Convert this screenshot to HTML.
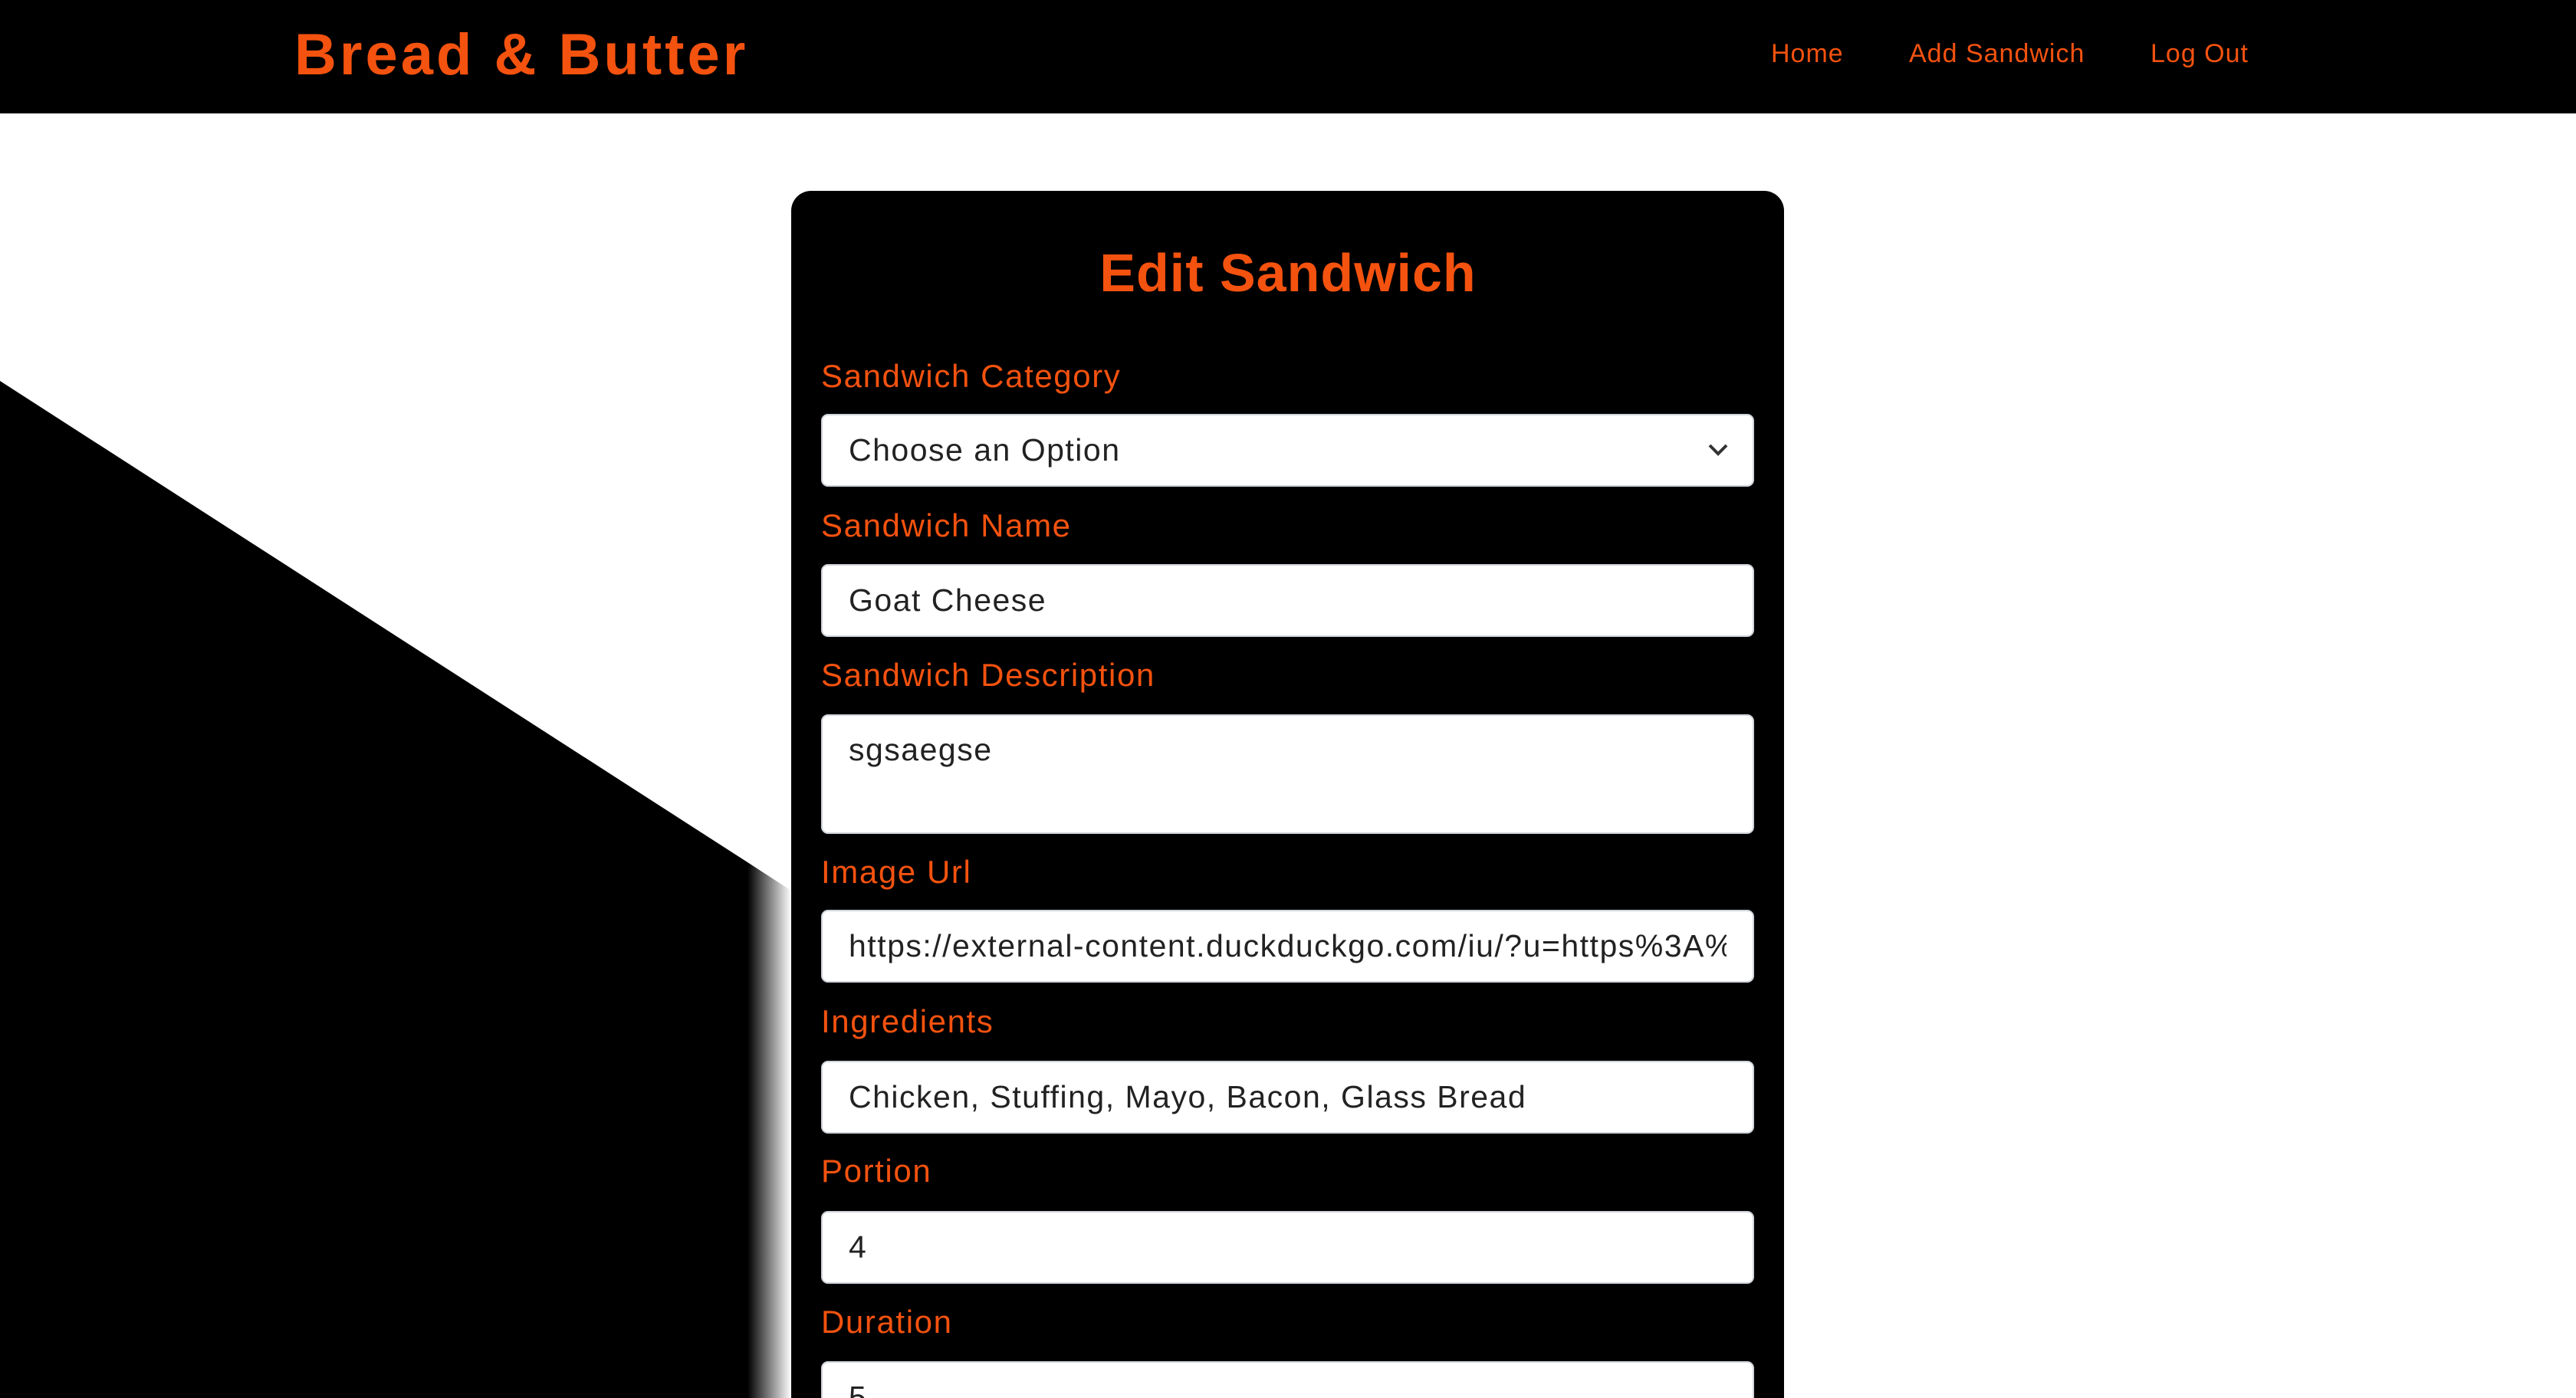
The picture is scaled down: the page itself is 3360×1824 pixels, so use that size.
<!DOCTYPE html>
<html><head><meta charset="utf-8"><style>
*{box-sizing:border-box;margin:0;padding:0}
html,body{width:3360px;height:1824px;overflow:hidden}
body{background:#fff;font-family:"Liberation Sans",sans-serif;position:relative}
.hdr{position:absolute;left:0;top:0;width:3360px;height:148px;background:#000}
.logo{position:absolute;left:384px;top:24px;font-size:76px;font-weight:bold;color:#f4520f;letter-spacing:4px;line-height:96px}
.nav{position:absolute;top:50px;font-size:34px;color:#f4520f;line-height:40px;letter-spacing:1px}
.card{position:absolute;left:1032px;top:249px;width:1295px;height:1575px;background:#000;border-radius:26px 26px 0 0}
h1{position:absolute;left:0;width:100%;top:316px;text-align:center;font-size:70px;color:#f4520f;font-weight:bold;line-height:80px;letter-spacing:1px}
.lbl{position:absolute;left:1071px;font-size:42px;color:#f4520f;line-height:50px;letter-spacing:1.6px}
.inp{position:absolute;left:1071px;width:1217px;height:95px;background:#fff;border:2px solid #d0d4da;border-radius:9px;font-size:41px;color:#222;padding-left:34px;line-height:91px;white-space:nowrap;overflow:hidden;letter-spacing:1.5px}
.clip{display:block;width:1145px;overflow:hidden}
</style></head><body>
<svg style="position:absolute;left:0;top:0" width="1040" height="1824"><defs><linearGradient id="g" x1="0" x2="1"><stop offset="0" stop-color="#000"/><stop offset="1" stop-color="#000" stop-opacity="0"/></linearGradient></defs>
<polygon points="0,497 975,1125 975,1824 0,1824" fill="#000"/>
<polygon points="975,1125 1032,1162 1032,1824 975,1824" fill="url(#g)"/></svg>
<div class="hdr"></div>
<div class="logo">Bread &amp; Butter</div>
<div class="nav" style="left:2310px">Home</div>
<div class="nav" style="left:2490px">Add Sandwich</div>
<div class="nav" style="left:2805px">Log Out</div>
<div class="card"></div>
<h1>Edit Sandwich</h1>
<div class="lbl" style="top:466px">Sandwich Category</div>
<div class="inp" style="top:540px">Choose an Option<svg style="position:absolute;left:1153px;top:35px" width="30" height="20"><path d="M4 4 L15 15 L26 4" fill="none" stroke="#333" stroke-width="4"/></svg></div>
<div class="lbl" style="top:661px">Sandwich Name</div>
<div class="inp" style="top:736px">Goat Cheese</div>
<div class="lbl" style="top:856px">Sandwich Description</div>
<div class="inp" style="top:932px;height:156px;line-height:50px;padding-top:19px">sgsaegse</div>
<div class="lbl" style="top:1113px">Image Url</div>
<div class="inp" style="top:1187px;padding-right:36px"><span class="clip">https://external-content.duckduckgo.com/iu/?u=https%3A%2F%2F</span></div>
<div class="lbl" style="top:1308px">Ingredients</div>
<div class="inp" style="top:1384px">Chicken, Stuffing, Mayo, Bacon, Glass Bread</div>
<div class="lbl" style="top:1503px">Portion</div>
<div class="inp" style="top:1580px">4</div>
<div class="lbl" style="top:1700px">Duration</div>
<div class="inp" style="top:1776px">5</div>
</body></html>
